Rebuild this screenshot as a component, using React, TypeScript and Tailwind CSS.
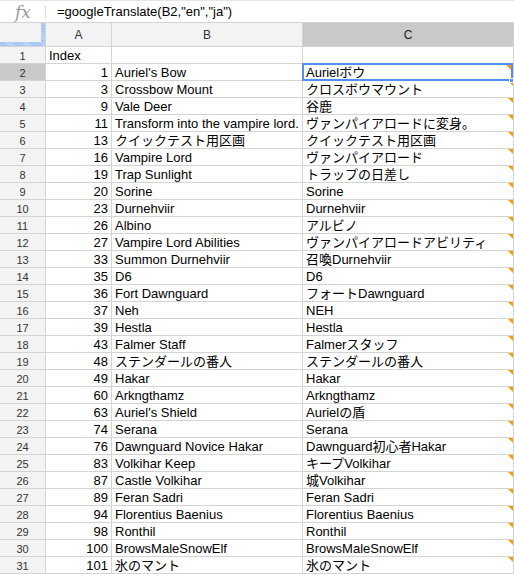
import React from "react";

const rows: [string, string, string][] = [
  ["1", "Auriel's Bow", "Aurielボウ"],
  ["3", "Crossbow Mount", "クロスボウマウント"],
  ["9", "Vale Deer", "谷鹿"],
  ["11", "Transform into the vampire lord.", "ヴァンパイアロードに変身。"],
  ["13", "クイックテスト用区画", "クイックテスト用区画"],
  ["16", "Vampire Lord", "ヴァンパイアロード"],
  ["19", "Trap Sunlight", "トラップの日差し"],
  ["20", "Sorine", "Sorine"],
  ["23", "Durnehviir", "Durnehviir"],
  ["26", "Albino", "アルビノ"],
  ["27", "Vampire Lord Abilities", "ヴァンパイアロードアビリティ"],
  ["33", "Summon Durnehviir", "召喚Durnehviir"],
  ["35", "D6", "D6"],
  ["36", "Fort Dawnguard", "フォートDawnguard"],
  ["37", "Neh", "NEH"],
  ["39", "Hestla", "Hestla"],
  ["43", "Falmer Staff", "Falmerスタッフ"],
  ["48", "ステンダールの番人", "ステンダールの番人"],
  ["49", "Hakar", "Hakar"],
  ["60", "Arkngthamz", "Arkngthamz"],
  ["63", "Auriel's Shield", "Aurielの盾"],
  ["74", "Serana", "Serana"],
  ["76", "Dawnguard Novice Hakar", "Dawnguard初心者Hakar"],
  ["83", "Volkihar Keep", "キープVolkihar"],
  ["87", "Castle Volkihar", "城Volkihar"],
  ["89", "Feran Sadri", "Feran Sadri"],
  ["94", "Florentius Baenius", "Florentius Baenius"],
  ["98", "Ronthil", "Ronthil"],
  ["100", "BrowsMaleSnowElf", "BrowsMaleSnowElf"],
  ["101", "氷のマント", "氷のマント"],
];

const font = "font-['Liberation_Sans','Arial','Noto_Sans_CJK_JP',sans-serif]";
const cell =
  "h-[17px] border-r border-b border-[#d4d4d4] bg-white pt-[1px] text-[13px] leading-[16px] text-black whitespace-nowrap overflow-hidden";
const rowHead =
  "h-[17px] border-r border-b border-[#d4d4d4] pt-[1px] text-[11px] leading-[16px] text-[#333] text-center";

function Triangle({ sel }: { sel?: boolean }) {
  return (
    <span
      className={`absolute h-0 w-0 border-l-[5px] border-t-[5px] border-l-transparent border-t-[#ff9900] ${
        sel ? "right-[2px] top-[1px] z-10" : "right-0 top-0"
      }`}
    />
  );
}

export default function App() {
  return (
    <div className={`${font} w-[514px] h-[574px] bg-white overflow-hidden`}>
      {/* formula bar */}
      <div className="flex h-[23px] items-center border-t border-b border-t-[#e5e5e5] border-b-[#d4d4d4] bg-white">
        <div className="flex w-[45px] items-center justify-center pl-[1px]">
          <span className="font-['DejaVu_Serif',serif] italic text-[17px] leading-[18px] text-[#999]">
            fx
          </span>
        </div>
        <div className="h-[12px] w-px bg-[#dadada]" />
        <div className="pl-[11px] text-[13px] leading-[16px] text-black">
          =googleTranslate(B2,"en","ja")
        </div>
      </div>

      <div className="relative grid grid-cols-[46px_66px_191px_211px]">
        {/* header row */}
        <div className="relative h-[24px] border-r border-b border-[#d4d4d4] bg-[#f3f3f3]">
          <div className="absolute right-0 top-0 h-[23px] w-[4px] bg-[repeating-linear-gradient(45deg,#9fbff5_0px,#9fbff5_1px,#c6d8fa_1px,#c6d8fa_2px)]" />
          <div className="absolute bottom-0 left-0 h-[4px] w-[45px] bg-[repeating-linear-gradient(45deg,#9fbff5_0px,#9fbff5_1px,#c6d8fa_1px,#c6d8fa_2px)]" />
        </div>
        <div className="flex h-[24px] items-center justify-center border-r border-b border-[#d4d4d4] bg-[#f3f3f3] text-[12px] text-[#333]">
          A
        </div>
        <div className="flex h-[24px] items-center justify-center border-r border-b border-[#d4d4d4] bg-[#f3f3f3] text-[12px] text-[#333]">
          B
        </div>
        <div className="flex h-[24px] items-center justify-center border-r border-b border-[#d4d4d4] bg-[#c9c9c9] text-[12px] text-[#222]">
          C
        </div>

        {/* row 1 */}
        <div className={`${rowHead} bg-[#f3f3f3]`}>1</div>
        <div className={`${cell} pl-[3px]`}>Index</div>
        <div className={cell} />
        <div className={cell} />

        {rows.map(([n, b, c], i) => {
          const rn = i + 2;
          const sel = rn === 2;
          return (
            <React.Fragment key={rn}>
              <div className={`${rowHead} ${sel ? "bg-[#c9c9c9]" : "bg-[#f3f3f3]"}`}>{rn}</div>
              <div className={`${cell} pr-[3px] text-right`}>{n}</div>
              <div className={`${cell} pl-[3px]`}>{b}</div>
              <div className={`${cell} relative pl-[3px]`}>
                {c}
                <Triangle sel={sel} />
              </div>
            </React.Fragment>
          );
        })}

        {/* selection overlay */}
        <div className="pointer-events-none absolute left-[302px] top-[40px] h-[18px] w-[211px] border-2 border-[#4d90fe]" />
        <div className="pointer-events-none absolute left-[509px] top-[55px] h-[5px] w-[5px] border border-white bg-[#4d90fe]" />
      </div>
    </div>
  );
}
